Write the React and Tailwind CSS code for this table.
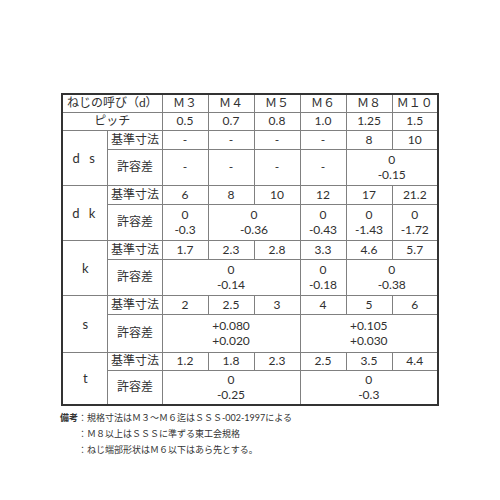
import React from "react";

const F = { fontFamily: "Lato, 'Noto Sans CJK JP', sans-serif" };

const td = "border border-[#808080] text-center align-middle p-0 leading-[14px]";

function Two({ a, b }) {
  return (
    <div className="flex flex-col items-center leading-[15px]">
      <span>{a}</span>
      <span>{b}</span>
    </div>
  );
}

export default function App() {
  return (
    <div className="w-[500px] h-[500px] bg-white text-[#303030]" style={F}>
      <div className="flex flex-col items-center pt-[93px]">
        <table className="border-collapse border-2 border-[#333] text-[12px] table-fixed w-[376px]">
          <colgroup>
            <col className="w-[46px]" />
            <col className="w-[54px]" />
            <col className="w-[46px]" />
            <col className="w-[46px]" />
            <col className="w-[46px]" />
            <col className="w-[46px]" />
            <col className="w-[46px]" />
            <col className="w-[46px]" />
          </colgroup>
          <tbody>
            <tr className="h-[18px]">
              <td className={td} colSpan={2}>ねじの呼び（d）</td>
              <td className={td}>Ｍ３</td>
              <td className={td}>Ｍ４</td>
              <td className={td}>Ｍ５</td>
              <td className={td}>Ｍ６</td>
              <td className={td}>Ｍ８</td>
              <td className={td}>Ｍ１０</td>
            </tr>
            <tr className="h-[18px]">
              <td className={td} colSpan={2}>ピッチ</td>
              <td className={td}>0.5</td>
              <td className={td}>0.7</td>
              <td className={td}>0.8</td>
              <td className={td}>1.0</td>
              <td className={td}>1.25</td>
              <td className={td}>1.5</td>
            </tr>
            <tr className="h-[19px]">
              <td className={td + " text-[13px]"} rowSpan={2}><span className="tracking-[3px]">d s</span></td>
              <td className={td}>基準寸法</td>
              <td className={td}>-</td>
              <td className={td}>-</td>
              <td className={td}>-</td>
              <td className={td}>-</td>
              <td className={td}>8</td>
              <td className={td}>10</td>
            </tr>
            <tr className="h-[36px]">
              <td className={td}>許容差</td>
              <td className={td}>-</td>
              <td className={td}>-</td>
              <td className={td}>-</td>
              <td className={td}>-</td>
              <td className={td} colSpan={2}><Two a="0" b="-0.15" /></td>
            </tr>
            <tr className="h-[19px]">
              <td className={td + " text-[13px]"} rowSpan={2}><span className="tracking-[3px]">d k</span></td>
              <td className={td}>基準寸法</td>
              <td className={td}>6</td>
              <td className={td}>8</td>
              <td className={td}>10</td>
              <td className={td}>12</td>
              <td className={td}>17</td>
              <td className={td}>21.2</td>
            </tr>
            <tr className="h-[36px]">
              <td className={td}>許容差</td>
              <td className={td}><Two a="0" b="-0.3" /></td>
              <td className={td} colSpan={2}><Two a="0" b="-0.36" /></td>
              <td className={td}><Two a="0" b="-0.43" /></td>
              <td className={td}><Two a="0" b="-1.43" /></td>
              <td className={td}><Two a="0" b="-1.72" /></td>
            </tr>
            <tr className="h-[19px]">
              <td className={td + " text-[13px]"} rowSpan={2}>k</td>
              <td className={td}>基準寸法</td>
              <td className={td}>1.7</td>
              <td className={td}>2.3</td>
              <td className={td}>2.8</td>
              <td className={td}>3.3</td>
              <td className={td}>4.6</td>
              <td className={td}>5.7</td>
            </tr>
            <tr className="h-[36px]">
              <td className={td}>許容差</td>
              <td className={td} colSpan={3}><Two a="0" b="-0.14" /></td>
              <td className={td}><Two a="0" b="-0.18" /></td>
              <td className={td} colSpan={2}><Two a="0" b="-0.38" /></td>
            </tr>
            <tr className="h-[19px]">
              <td className={td + " text-[13px]"} rowSpan={2}>s</td>
              <td className={td}>基準寸法</td>
              <td className={td}>2</td>
              <td className={td}>2.5</td>
              <td className={td}>3</td>
              <td className={td}>4</td>
              <td className={td}>5</td>
              <td className={td}>6</td>
            </tr>
            <tr className="h-[38px]">
              <td className={td}>許容差</td>
              <td className={td} colSpan={3}><Two a="+0.080" b="+0.020" /></td>
              <td className={td} colSpan={3}><Two a="+0.105" b="+0.030" /></td>
            </tr>
            <tr className="h-[18px]">
              <td className={td + " text-[13px]"} rowSpan={2}>t</td>
              <td className={td}>基準寸法</td>
              <td className={td}>1.2</td>
              <td className={td}>1.8</td>
              <td className={td}>2.3</td>
              <td className={td}>2.5</td>
              <td className={td}>3.5</td>
              <td className={td}>4.4</td>
            </tr>
            <tr className="h-[35px]">
              <td className={td}>許容差</td>
              <td className={td} colSpan={3}><Two a="0" b="-0.25" /></td>
              <td className={td} colSpan={3}><Two a="0" b="-0.3" /></td>
            </tr>
          </tbody>
        </table>
        <div className="w-[380px] mt-[4px] text-[9px] leading-[16px] text-[#333]">
          <div><span className="font-bold">備考</span>：規格寸法はＭ３～Ｍ６迄はＳＳＳ-002-1997による</div>
          <div className="pl-[18px]">：Ｍ８以上はＳＳＳに準ずる東工会規格</div>
          <div className="pl-[18px]">：ねじ端部形状はＭ６以下はあら先とする。</div>
        </div>
      </div>
    </div>
  );
}
